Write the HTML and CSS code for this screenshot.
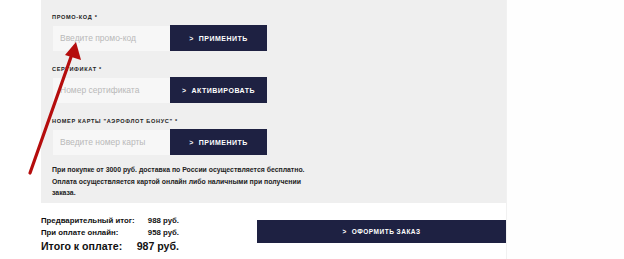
FILE: index.html
```html
<!DOCTYPE html>
<html lang="ru">
<head>
<meta charset="utf-8">
<link rel="stylesheet" href="styles.css">
</head>
<body>
<div class="page">
  <div class="main">
    <div class="panel">
      <div class="field">
        <div class="label">Промо-код *</div>
        <div class="row">
          <div class="input">Введите промо-код</div>
          <div class="btn"><span class="chev">&gt;</span>Применить</div>
        </div>
      </div>
      <div class="field">
        <div class="label">Сертификат *</div>
        <div class="row">
          <div class="input">Номер сертификата</div>
          <div class="btn"><span class="chev">&gt;</span>Активировать</div>
        </div>
      </div>
      <div class="field">
        <div class="label">Номер карты "Аэрофлот бонус" *</div>
        <div class="row">
          <div class="input">Введите номер карты</div>
          <div class="btn"><span class="chev">&gt;</span>Применить</div>
        </div>
      </div>
      <p class="note">При покупке от 3000 руб. доставка по России осуществляется бесплатно.<br>Оплата осуществляется картой онлайн либо наличными при получении<br>заказа.</p>
    </div>
    <div class="footer">
      <div class="totals">
        <div class="trow"><span>Предварительный итог:</span><span>988 руб.</span></div>
        <div class="trow"><span>При оплате онлайн:</span><span>958 руб.</span></div>
        <div class="trow big"><span>Итого к оплате:</span><span>987 руб.</span></div>
      </div>
      <div class="order"><span class="chev">&gt;</span>Оформить заказ</div>
    </div>
  </div>
  <div class="side"></div>
  <svg class="arrow" width="624" height="259" viewBox="0 0 624 259">
    <line x1="30" y1="173" x2="71" y2="57" stroke="#b50d0d" stroke-width="3.2" stroke-linecap="round"/>
    <polygon points="76,42 81,60 65,55" fill="#b50d0d"/>
  </svg>
</div>
</body>
</html>
```
FILE: styles.css
```css
html, body {
  margin: 0;
  padding: 0;
  background: #ffffff;
}
.page {
  position: relative;
  width: 624px;
  height: 259px;
  display: flex;
  overflow: hidden;
  font-family: "Liberation Sans", Arial, sans-serif;
  color: #1b1b1b;
}
.main {
  margin-left: 41px;
  width: 465px;
  display: flex;
  flex-direction: column;
}
.side {
  flex: 1;
  border-left: 1px solid #f1f1f1;
  background: #fefefe;
}
.panel {
  background: #efefef;
  padding: 13px 11px 4px 11px;
  height: 203px;
  box-sizing: border-box;
}
.field {
  margin-bottom: 14px;
}
.label {
  font-size: 5.6px;
  font-weight: bold;
  text-transform: uppercase;
  letter-spacing: 0.65px;
  line-height: 8px;
  height: 8px;
  color: #222;
}
.row {
  display: flex;
  align-items: center;
  margin-top: 4px;
  height: 26px;
}
.input {
  width: 117px;
  height: 25px;
  margin-left: 1px;
  background: #f7f7f7;
  color: #b9b9b9;
  font-size: 8.5px;
  line-height: 25px;
  padding-left: 7px;
  box-sizing: border-box;
}
.btn {
  width: 97px;
  height: 26px;
  background: #1e2142;
  color: #ffffff;
  font-size: 7px;
  font-weight: bold;
  text-transform: uppercase;
  letter-spacing: 0.5px;
  display: flex;
  align-items: center;
  justify-content: center;
}
.chev {
  margin-right: 5px;
  font-weight: bold;
}
.note {
  margin: -5px 0 0 0;
  font-size: 6.9px;
  font-weight: bold;
  line-height: 11.5px;
  color: #222;
}
.footer {
  display: flex;
  align-items: flex-start;
  padding-top: 12px;
}
.totals {
  width: 138px;
}
.trow {
  display: flex;
  justify-content: space-between;
  font-size: 7.8px;
  font-weight: bold;
  line-height: 12px;
  color: #111;
}
.trow.big {
  font-size: 10.6px;
  line-height: 14px;
}
.order {
  margin-left: auto;
  width: 249px;
  height: 23px;
  margin-top: 5px;
  background: #1e2142;
  color: #fff;
  font-size: 6.5px;
  font-weight: bold;
  text-transform: uppercase;
  letter-spacing: 0.5px;
  display: flex;
  align-items: center;
  justify-content: center;
}
.arrow {
  position: absolute;
  left: 0;
  top: 0;
  pointer-events: none;
}
```
